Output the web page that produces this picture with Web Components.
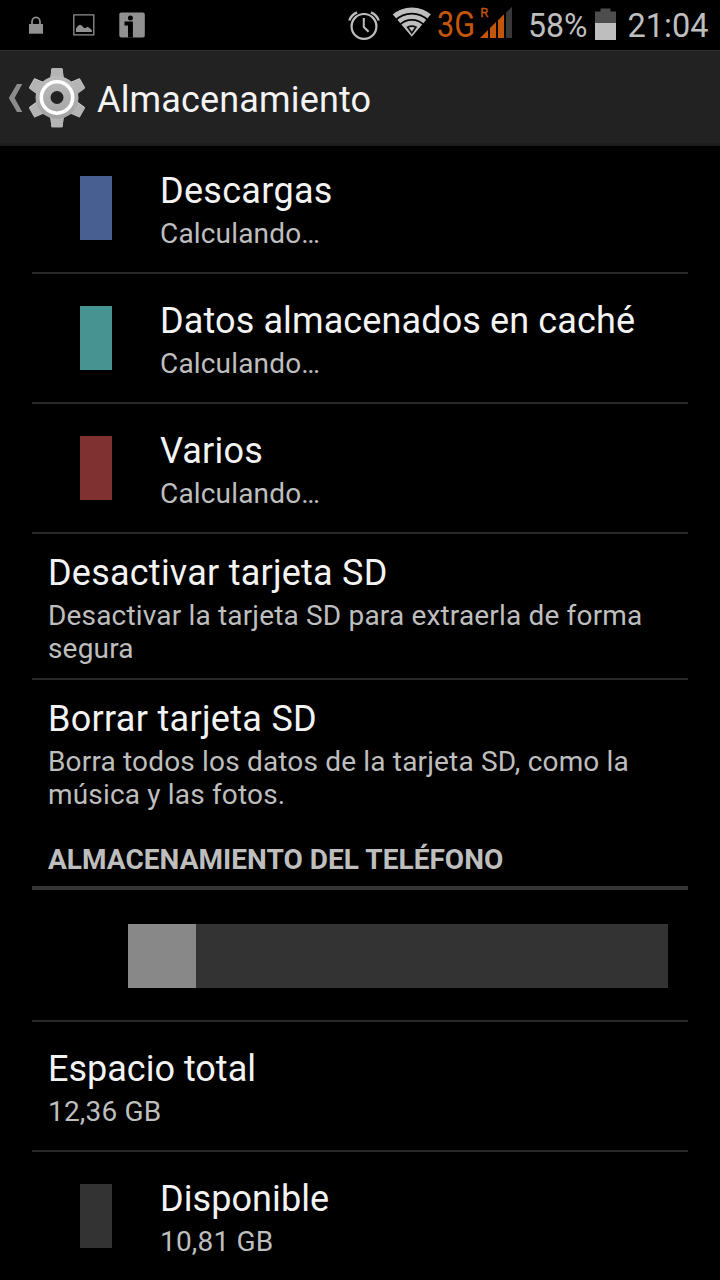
<!DOCTYPE html>
<html lang="es">
<head>
<meta charset="utf-8">
<title>Almacenamiento</title>
<style>
  body {
    margin: 0;
    background: #000;
    font-family: Roboto, "Noto Sans", sans-serif;
  }
</style>
</head>
<body>
<storage-screen></storage-screen>

<script>
// Status bar: notifications on the left, system state on the right
class StatusBar extends HTMLElement {
  constructor() {
    super();
    this.attachShadow({ mode: 'open' });
  }

  connectedCallback() {
    this.render();
  }

  render() {
    this.shadowRoot.innerHTML = `
      <style>
        :host {
          display: flex;
          justify-content: space-between;
          height: 50px;
          background: #000;
        }
        svg { display: block; }
        .side { display: flex; }
      </style>

      <div class="side">
        <svg width="150" height="50" viewBox="0 0 150 50">
          <path d="M32 25v-3.3a4 4.3 0 0 1 8 0V25" fill="none" stroke="#919191" stroke-width="1.7"/>
          <path d="M29 24h14v9.7H29z" fill="#919191"/>
          <path d="M73.8 14.8h20v20h-20z" fill="none" stroke="#919191" stroke-width="1.3"/>
          <path d="M76 32v-3.6l2-2.6 2-1 2 1 2 2.2 1.5 0 2-1.2 2 1.2 2.3 2V32z" fill="#919191"/>
          <rect x="119.3" y="12.5" width="25.5" height="25" rx="2" fill="#919191"/>
          <circle cx="130.4" cy="17.9" r="2.5" fill="#000"/>
          <path d="M124.5 21.5h8.4v16H128v-12h-3.500z" fill="#000"/>
        </svg>
      </div>

      <div class="side">
        <svg width="180" height="50" viewBox="340 0 180 50">
          <g fill="none" stroke="#bebebe">
            <circle cx="364" cy="26.400" r="12.400" stroke-width="2.200"/>
            <path d="M363.800 18v9l4.800 4.800" stroke-width="2"/>
            <path d="M349.300 20.500q1.500-5.300 7.700-8.200M378.700 20.500q-1.500-5.300-7.700-8.200" stroke-width="2.400"/>
          </g>
          <clipPath id="fan"><path d="M392 13.400L411.800 36.800 431.600 13.400V5H392z"/></clipPath>
          <g clip-path="url(#fan)">
            <g fill="none" stroke="#bebebe">
              <circle cx="411.800" cy="37" r="26.900" stroke-width="5.400"/>
              <circle cx="411.800" cy="37" r="20.300" stroke-width="4.600"/>
            </g>
            <circle cx="411.800" cy="37" r="16.300" fill="#bebebe"/>
          </g>
          <path d="M407.600 27.200q4.200-2 8.400 0l-4.200 5.800z" fill="#bebebe" stroke="#0c0c0c" stroke-width="1.700"/>
          <text x="437" y="37" font-size="36" textLength="38" lengthAdjust="spacingAndGlyphs" fill="#c4560a">3G</text>
          <text x="480.300" y="16.500" font-size="13" textLength="8" lengthAdjust="spacingAndGlyphs" fill="#c4560a" stroke="#c4560a" stroke-width=".3">R</text>
          <path d="M480 38l8-8v8zM490 38V28l6-6V38zM498 38V20.300l6-6V38z" fill="#c4560a"/>
          <path d="M506 38V12.600l6-5.900V38z" fill="#383838"/>
        </svg>
        <svg width="200" height="50" viewBox="520 0 200 50">
          <text x="528" y="37.300" font-size="33" textLength="59.500" lengthAdjust="spacingAndGlyphs" fill="#bebebe">58%</text>
          <path d="M595 23v-11.500h5.500v-3h10v3h5.500V23z" fill="#4d4d4d"/>
          <path d="M595 23h21v17h-21z" fill="#bebebe"/>
          <text x="627.500" y="37.300" font-size="33" textLength="81" lengthAdjust="spacingAndGlyphs" fill="#bebebe">21:04</text>
        </svg>
      </div>
    `;
  }
}
customElements.define('status-bar', StatusBar);

// Action bar with the up caret and the settings gear
class ActionBar extends HTMLElement {
  constructor() {
    super();
    this.attachShadow({ mode: 'open' });
  }

  connectedCallback() {
    this.render();
  }

  render() {
    const teeth = [0, 60, 120, 180, 240, 300]
      .map(a => `<path d="M51.300 69.200q0-1 1-1h9.400q1 0 1 1l.8 7.600q.6 2.400 3 3.200v6H47.500v-6q2.400-.8 3-3.200z" transform="rotate(${a} 57 97.500)"/>`)
      .join('');

    this.shadowRoot.innerHTML = `
      <style>
        :host {
          display: flex;
          box-sizing: border-box;
          height: 96px;
          background: #222;
          border-top: 1px solid #303030;
          border-bottom: 3px solid #1c1c1c;
          color: #f3f3f3;
        }
        svg { display: block; flex: none; margin-top: -1px; }
        .title {
          font-size: 36px;
          line-height: 42px;
          padding-top: 28px;
          letter-spacing: 0.16px;
        }
      </style>

      <svg width="97" height="96" viewBox="0 50 97 96">
        <defs>
          <linearGradient id="metal" gradientUnits="userSpaceOnUse" x1="0" y1="75" x2="0" y2="120">
            <stop offset="0" stop-color="#bdbdbd"/>
            <stop offset="1" stop-color="#a2a2a2"/>
          </linearGradient>
          <mask id="hole">
            <path d="M20 60h75v75H20z" fill="#fff"/>
            <circle cx="57" cy="97.500" r="6.500" fill="#000"/>
          </mask>
        </defs>
        <path d="M22.300 84L17 84 8.800 98 17 112h5.300L14.600 98z" fill="#8c8c8c"/>
        <g mask="url(#hole)">
          <g fill="#111" opacity=".6" transform="translate(0 1)">${teeth}</g>
          <g fill="#e0e0e0">${teeth}</g>
          <g fill="#b4b4b4" transform="translate(0 .7)">${teeth}</g>
          <circle cx="57" cy="97.500" r="21.500" fill="url(#metal)"/>
          <circle cx="57" cy="97.500" r="15.700" fill="none" stroke="#fff" stroke-width="3.600"/>
        </g>
      </svg>
      <div class="title"><slot></slot></div>
    `;
  }
}
customElements.define('action-bar', ActionBar);

// One preference: optional colour swatch, title and summary
class PreferenceRow extends HTMLElement {
  constructor() {
    super();
    this.attachShadow({ mode: 'open' });
  }

  connectedCallback() {
    this.render();
  }

  render() {
    const color = this.getAttribute('color');
    const spacing = this.getAttribute('spacing') || '0.19';

    this.shadowRoot.innerHTML = `
      <style>
        :host {
          display: flex;
          align-items: center;
          box-sizing: border-box;
          min-height: 130px;
          padding: 0 16px;
          border-bottom: 2px solid #292929;
        }
        :host([tall]) { height: 146px; }
        :host([last]) { height: 144px; border-bottom: 0; }
        .swatch {
          flex: none;
          width: 32px;
          height: 64px;
          margin: 0 48px 0 32px;
        }
        .text { padding-top: 4px; }
        .title {
          color: #f3f3f3;
          font-size: 36px;
          line-height: 43px;
          white-space: nowrap;
          letter-spacing: ${spacing}px;
        }
        .summary {
          margin-top: 4px;
          color: #bebebe;
          font-size: 28px;
          line-height: 33px;
          letter-spacing: 0.17px;
        }
      </style>

      ${color ? `<div class="swatch" style="background: ${color}"></div>` : ''}
      <div class="text">
        <div class="title"><slot name="title"></slot></div>
        <div class="summary"><slot></slot></div>
      </div>
    `;
  }
}
customElements.define('preference-row', PreferenceRow);

class CategoryHeader extends HTMLElement {
  constructor() {
    super();
    this.attachShadow({ mode: 'open' });
  }

  connectedCallback() {
    this.shadowRoot.innerHTML = `
      <style>
        :host {
          display: block;
          box-sizing: border-box;
          height: 66px;
          padding: 19px 16px 0;
          border-bottom: 4px solid #353535;
          color: #bebebe;
          font-size: 28px;
          font-weight: 700;
          line-height: 33px;
          white-space: nowrap;
          letter-spacing: 0.04px;
        }
      </style>
      <slot></slot>
    `;
  }
}
customElements.define('category-header', CategoryHeader);

// Usage bar, "used" is the filled width in percent
class UsageBar extends HTMLElement {
  constructor() {
    super();
    this.attachShadow({ mode: 'open' });
  }

  connectedCallback() {
    const used = this.getAttribute('used');

    this.shadowRoot.innerHTML = `
      <style>
        :host {
          display: flex;
          align-items: center;
          box-sizing: border-box;
          height: 132px;
          padding: 2px 20px 0 96px;
          border-bottom: 2px solid #292929;
        }
        .track { flex: 1; height: 64px; background: #333; }
        .used { height: 100%; background: #888; }
      </style>
      <div class="track"><div class="used" style="width: ${used}%"></div></div>
    `;
  }
}
customElements.define('usage-bar', UsageBar);

class StorageScreen extends HTMLElement {
  constructor() {
    super();
    this.attachShadow({ mode: 'open' });
  }

  connectedCallback() {
    this.render();
  }

  render() {
    this.shadowRoot.innerHTML = `
      <style>
        :host {
          display: flex;
          flex-direction: column;
          width: 720px;
          height: 1280px;
          overflow: hidden;
          background: #000;
        }
        status-bar, action-bar { flex: none; }
        main { flex: 1; min-height: 0; overflow: hidden; padding: 0 32px; }
        /* the list is scrolled a little under the action bar */
        .list { margin-top: -2px; }
      </style>

      <status-bar></status-bar>
      <action-bar>Almacenamiento</action-bar>
      <main>
        <div class="list">
          <preference-row color="#476091" spacing="0.3"><span slot="title">Descargas</span>Calculando…</preference-row>
          <preference-row color="#479391" spacing="0.12"><span slot="title">Datos almacenados en caché</span>Calculando…</preference-row>
          <preference-row color="#7f3131"><span slot="title">Varios</span>Calculando…</preference-row>
          <preference-row tall spacing="0.23"><span slot="title">Desactivar tarjeta SD</span>Desactivar la tarjeta SD para extraerla de forma<br>segura</preference-row>
          <preference-row last spacing="0.3"><span slot="title">Borrar tarjeta SD</span>Borra todos los datos de la tarjeta SD, como la<br>música y las fotos.</preference-row>
          <category-header>ALMACENAMIENTO DEL TELÉFONO</category-header>
          <usage-bar used="12.6"></usage-bar>
          <preference-row spacing="0"><span slot="title">Espacio total</span>12,36 GB</preference-row>
          <preference-row color="#333" spacing="0.08"><span slot="title">Disponible</span>10,81 GB</preference-row>
        </div>
      </main>
    `;
  }
}
customElements.define('storage-screen', StorageScreen);
</script>
</body>
</html>
